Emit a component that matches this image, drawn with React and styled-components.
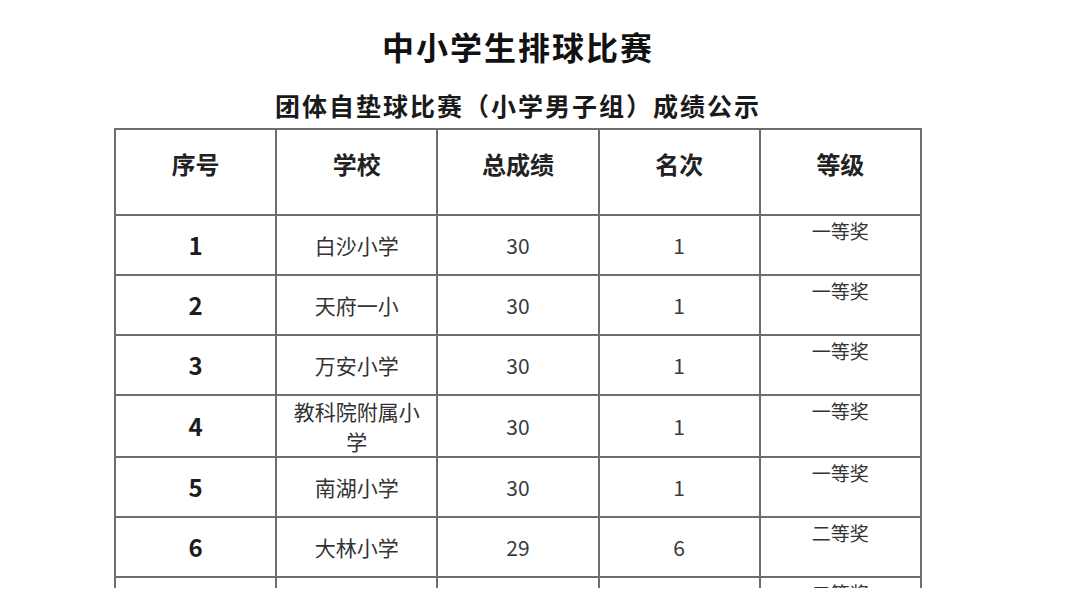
import React from "react";
import styled, { createGlobalStyle } from "styled-components";

const Global = createGlobalStyle`
  html, body { margin: 0; padding: 0; background: #ffffff; }
  body { font-family: "Noto Sans CJK SC", "Noto Sans", sans-serif; }
`;

const Page = styled.div`
  width: 1080px;
  height: 588px;
  overflow: hidden;
  box-sizing: border-box;
  padding: 26px 44px 0 0;
  display: flex;
  flex-direction: column;
  align-items: center;
  background: #fff;
`;

const Title = styled.h1`
  margin: 0;
  font-size: 32px;
  line-height: 40px;
  font-weight: 700;
  letter-spacing: 2px;
  color: #111;
`;

const Subtitle = styled.h2`
  margin: 23px 0 0;
  font-size: 25px;
  line-height: 32px;
  font-weight: 700;
  letter-spacing: 2px;
  color: #1a1a1a;
`;

const Table = styled.table`
  margin-top: 7px;
  width: 808px;
  border-collapse: collapse;
  table-layout: fixed;
  border: 2px solid #6e6e6e;
`;

const HeadCell = styled.th`
  height: 86px;
  box-sizing: border-box;
  border: 2px solid #6e6e6e;
  vertical-align: top;
  padding: 19px 10px 0;
  font-size: 24px;
  line-height: 30px;
  font-weight: 600;
  color: #222;
  text-align: center;
`;

const Row = styled.tr`
  height: 60px;
`;

const Cell = styled.td`
  border: 2px solid #6e6e6e;
  box-sizing: border-box;
  padding: ${(p) => (p.$top ? "2px 10px 0" : "0 10px")};
  vertical-align: ${(p) => (p.$top ? "top" : "middle")};
  text-align: center;
  font-size: ${(p) => p.$size}px;
  line-height: ${(p) => (p.$top ? "26px" : "30px")};
  font-weight: ${(p) => (p.$bold ? 700 : 400)};
  color: ${(p) => p.$color};
  word-break: break-all;
`;

const headers = ["序号", "学校", "总成绩", "名次", "等级"];

const rows = [
  ["1", "白沙小学", "30", "1", "一等奖"],
  ["2", "天府一小", "30", "1", "一等奖"],
  ["3", "万安小学", "30", "1", "一等奖"],
  ["4", "教科院附属小学", "30", "1", "一等奖"],
  ["5", "南湖小学", "30", "1", "一等奖"],
  ["6", "大林小学", "29", "6", "二等奖"],
  ["", "", "", "", "二等奖"],
];

export default function App() {
  return (
    <>
      <Global />
      <Page>
        <Title>中小学生排球比赛</Title>
        <Subtitle>团体自垫球比赛（小学男子组）成绩公示</Subtitle>
        <Table>
          <thead>
            <tr>
              {headers.map((h) => (
                <HeadCell key={h}>{h}</HeadCell>
              ))}
            </tr>
          </thead>
          <tbody>
            {rows.map((r, i) => (
              <Row key={i}>
                <Cell $size={24} $bold $color="#1c1c1c">{r[0]}</Cell>
                <Cell $size={21} $color="#333">{r[1]}</Cell>
                <Cell $size={21} $color="#3a3a3a">{r[2]}</Cell>
                <Cell $size={21} $color="#3a3a3a">{r[3]}</Cell>
                <Cell $size={19} $top $color="#333">{r[4]}</Cell>
              </Row>
            ))}
          </tbody>
        </Table>
      </Page>
    </>
  );
}
